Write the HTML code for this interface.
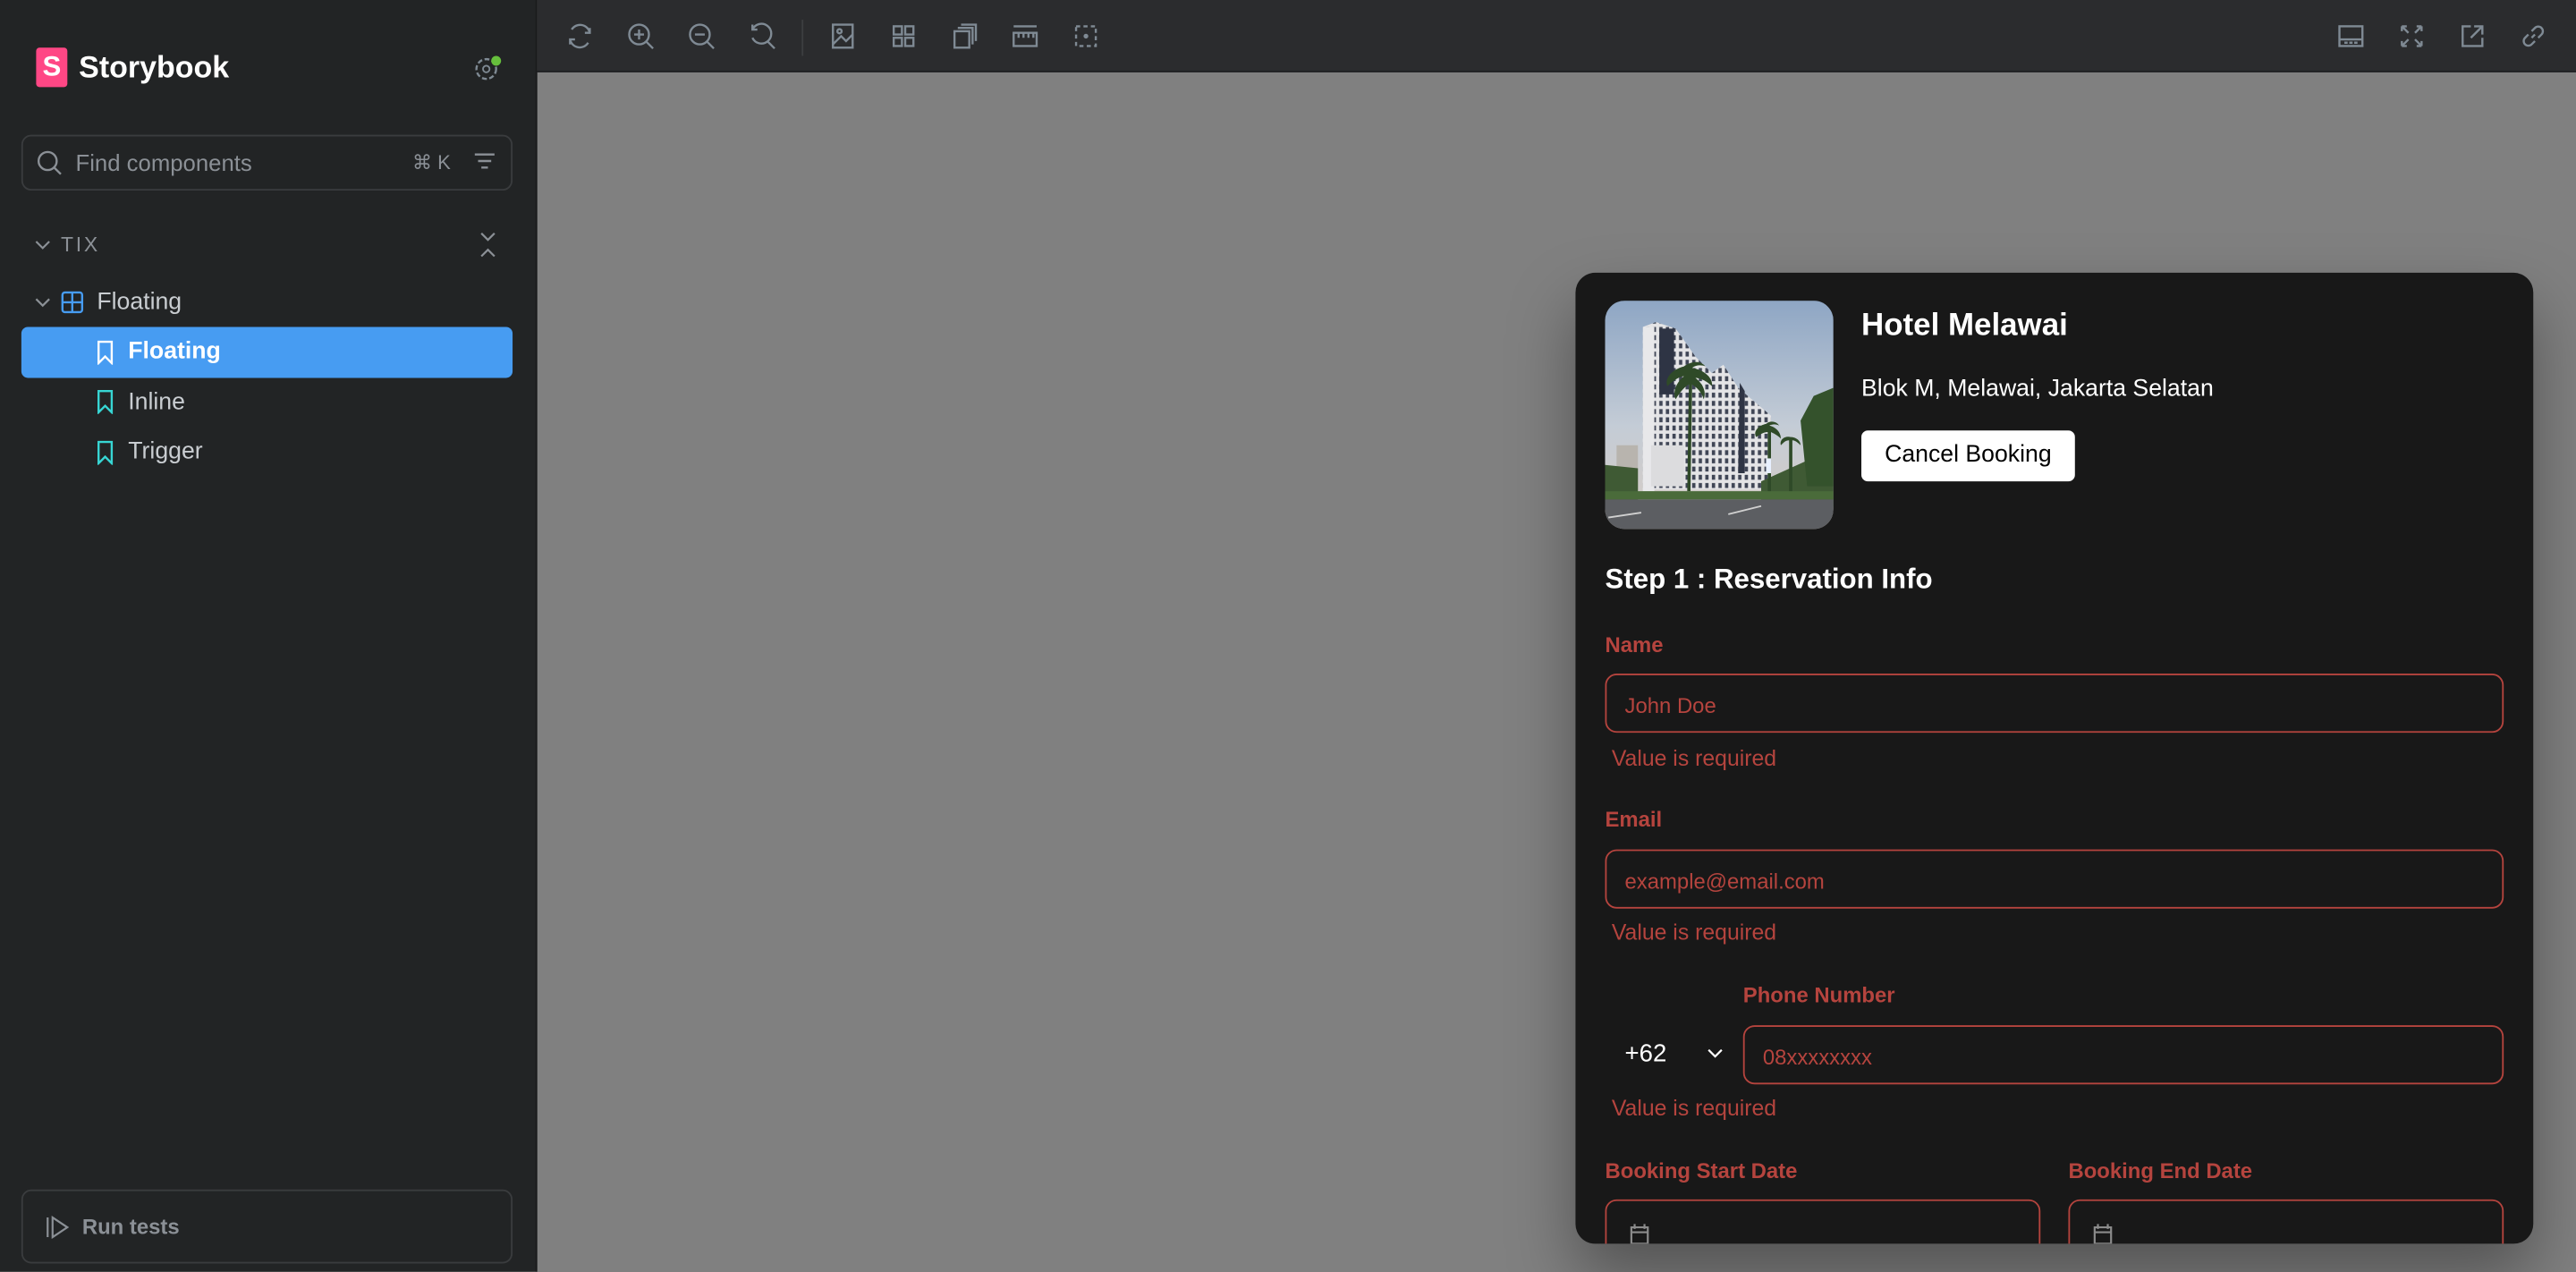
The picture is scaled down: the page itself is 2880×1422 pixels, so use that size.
<!DOCTYPE html>
<html><head><meta charset="utf-8">
<style>
*{box-sizing:border-box;margin:0;padding:0}
html,body{width:2880px;height:1422px;overflow:hidden;background:#808080}
#w{width:1568px;height:774px;transform:scale(1.836735);transform-origin:0 0;position:relative;font-family:"Liberation Sans",sans-serif}
#side{position:absolute;left:0;top:0;width:327px;height:774px;background:#222425;border-right:1px solid #1a1b1c}
#top{position:absolute;left:327px;top:0;right:0;height:44px;background:#2b2c2e;border-bottom:1px solid #1f2022}
#top svg{position:absolute;top:13px;width:18px;height:18px;fill:none;stroke:#7f8a94;stroke-width:1.3}
.card{position:absolute;left:959px;top:166px;width:583px;height:591px;background:#181818;border-radius:12px;box-shadow:0 20px 40px rgba(0,0,0,.35);overflow:hidden;color:#fff}
.lbl{position:absolute;font-size:13px;font-weight:bold;color:#b5443e}
.inp{position:absolute;height:36px;border:1px solid #b5443e;border-radius:7px;font-size:13px;color:#b5443e;padding:11px 11px}
.err{position:absolute;font-size:13.5px;color:#b5443e}
.tree{position:absolute;font-size:14.5px;color:#c9cdd1}
</style></head><body><div id="w">
<div id="side">
  <div style="position:absolute;left:22px;top:29px;width:19px;height:24px;background:#ff4785;border-radius:2px;color:#fff;font-weight:bold;font-size:17px;text-align:center;line-height:24px">S</div>
  <div style="position:absolute;left:48px;top:30px;font-size:18.5px;font-weight:bold;color:#fff">Storybook</div>
  <svg style="position:absolute;left:288px;top:33px" width="18" height="18" viewBox="0 0 18 18"><circle cx="8" cy="9" r="6" fill="none" stroke="#7f8a94" stroke-width="1.3" stroke-dasharray="3 1.5"/><circle cx="8" cy="9" r="2" fill="none" stroke="#7f8a94"/><circle cx="14" cy="4" r="3" fill="#66bf3c"/></svg>
  <div style="position:absolute;left:13px;top:82px;width:299px;height:34px;border:1px solid #3a3c3e;border-radius:6px"></div>
  <svg style="position:absolute;left:22px;top:91px" width="16" height="16" viewBox="0 0 16 16"><circle cx="7" cy="7" r="5.5" fill="none" stroke="#8b9096" stroke-width="1.3"/><path d="M11 11l4 4" stroke="#8b9096" stroke-width="1.3"/></svg>
  <div style="position:absolute;left:46px;top:91px;font-size:14px;color:#8b9096">Find components</div>
  <div style="position:absolute;left:251px;top:92px;font-size:12px;color:#8b9096">⌘ K</div>
  <svg style="position:absolute;left:288px;top:92px" width="14" height="14" viewBox="0 0 14 14" stroke="#8b9096" stroke-width="1.3"><path d="M1 2h12M3 6h8M5 10h4"/></svg>
  <svg style="position:absolute;left:21px;top:145px" width="10" height="8" viewBox="0 0 10 8"><path d="M1 2l4 4 4-4" fill="none" stroke="#8b9096" stroke-width="1.2"/></svg>
  <div style="position:absolute;left:37px;top:142px;font-size:12.5px;color:#8b9096;letter-spacing:1.5px">TIX</div>
  <svg style="position:absolute;left:291px;top:140px" width="12" height="18" viewBox="0 0 12 18"><path d="M2 2l4 4 4-4M2 16l4-4 4 4" fill="none" stroke="#8b9096" stroke-width="1.2"/></svg>
  <svg style="position:absolute;left:21px;top:180px" width="10" height="8" viewBox="0 0 10 8"><path d="M1 2l4 4 4-4" fill="none" stroke="#8b9096" stroke-width="1.2"/></svg>
  <svg style="position:absolute;left:37px;top:177px" width="14" height="14" viewBox="0 0 14 14"><rect x="1" y="1" width="12" height="12" rx="1.5" fill="none" stroke="#479cf2" stroke-width="1.3"/><path d="M7 1v12M1 7h12" stroke="#479cf2" stroke-width="1.3"/></svg>
  <div class="tree" style="left:59px;top:176px">Floating</div>
  <div style="position:absolute;left:13px;top:199px;width:299px;height:31px;background:#479cf2;border-radius:4px"></div>
  <svg style="position:absolute;left:58px;top:207px" width="12" height="15" viewBox="0 0 12 15"><path d="M2 1h8v13l-4-4-4 4z" fill="none" stroke="#fff" stroke-width="1.3"/></svg>
  <div style="position:absolute;left:78px;top:206px;font-size:14.5px;font-weight:bold;color:#fff">Floating</div>
  <svg style="position:absolute;left:58px;top:237px" width="12" height="15" viewBox="0 0 12 15"><path d="M2 1h8v13l-4-4-4 4z" fill="none" stroke="#37d5d3" stroke-width="1.3"/></svg>
  <div class="tree" style="left:78px;top:237px">Inline</div>
  <svg style="position:absolute;left:58px;top:268px" width="12" height="15" viewBox="0 0 12 15"><path d="M2 1h8v13l-4-4-4 4z" fill="none" stroke="#37d5d3" stroke-width="1.3"/></svg>
  <div class="tree" style="left:78px;top:267px">Trigger</div>
  <div style="position:absolute;left:13px;top:724px;width:299px;height:45px;border:1px solid #3a3c3e;border-radius:6px"></div>
  <svg style="position:absolute;left:28px;top:740px" width="14" height="14" viewBox="0 0 14 14"><path d="M1 1v12M4 1l9 6-9 6z" fill="none" stroke="#8b9096" stroke-width="1.2"/></svg>
  <div style="position:absolute;left:50px;top:739px;font-size:13px;font-weight:bold;color:#8b9096">Run tests</div>
</div>
<div id="top">
  <svg style="left:17px" viewBox="0 0 18 18"><path d="M4 5a6 6 0 0 1 11 2M14 13a6 6 0 0 1-11-2M12 7h3V4M6 11H3v3"/></svg>
  <svg style="left:54px" viewBox="0 0 18 18"><circle cx="8" cy="8" r="6"/><path d="M12.5 12.5l4 4M8 5v6M5 8h6"/></svg>
  <svg style="left:91px" viewBox="0 0 18 18"><circle cx="8" cy="8" r="6"/><path d="M12.5 12.5l4 4M5 8h6"/></svg>
  <svg style="left:128px" viewBox="0 0 18 18"><path d="M3 5a6 6 0 1 1 0 5M3 2v3h3M12.5 12.5l4 4"/></svg>
  <div style="position:absolute;left:161px;top:12px;width:1px;height:22px;background:#3c3e40"></div>
  <svg style="left:177px" viewBox="0 0 18 18"><rect x="3" y="2" width="12" height="14"/><circle cx="7" cy="6" r="1.3"/><path d="M3 14l5-5 3 3 4-4"/></svg>
  <svg style="left:214px" viewBox="0 0 18 18"><rect x="3" y="3" width="5" height="5"/><rect x="10" y="3" width="5" height="5"/><rect x="3" y="10" width="5" height="5"/><rect x="10" y="10" width="5" height="5"/></svg>
  <svg style="left:251px" viewBox="0 0 18 18"><rect x="3" y="6" width="9" height="10"/><path d="M5 4h9v10M7 2h9v10"/></svg>
  <svg style="left:288px" viewBox="0 0 18 18"><path d="M2 3h14M2 7h14v8H2zM5 7v3M8 7v3M11 7v3M14 7v3"/></svg>
  <svg style="left:325px" viewBox="0 0 18 18"><rect x="3" y="3" width="12" height="12" stroke-dasharray="2.5 2"/><circle cx="9" cy="9" r=".8" fill="#7f8a94"/></svg>
  <svg style="left:1095px" viewBox="0 0 18 18"><rect x="2" y="3" width="14" height="12"/><path d="M2 11h14M5 13h2M8 13h2M11 13h2"/></svg>
  <svg style="left:1132px" viewBox="0 0 18 18"><path d="M3 3l4 4M3 3v3M3 3h3M15 3l-4 4M15 3v3M15 3h-3M3 15l4-4M3 15v-3M3 15h3M15 15l-4-4M15 15v-3M15 15h-3"/></svg>
  <svg style="left:1169px" viewBox="0 0 18 18"><path d="M8 3H3v12h12v-5M10 3h5v5M15 3l-7 7"/></svg>
  <svg style="left:1206px" viewBox="0 0 18 18"><path d="M8 10l2-2M6 8l-2 2a2.5 2.5 0 0 0 4 4l2-2M12 10l2-2a2.5 2.5 0 0 0-4-4L8 6"/></svg>
</div>
<div class="card">
  <svg style="position:absolute;left:18px;top:17px;border-radius:12px" width="139" height="139" viewBox="0 0 139 139">
    <defs><linearGradient id="sk" x1="0" y1="0" x2="0" y2="1"><stop offset="0" stop-color="#8ea6c4"/><stop offset=".55" stop-color="#c4ccd6"/><stop offset="1" stop-color="#d8cdc2"/></linearGradient>
    <pattern id="win" width="4" height="5" patternUnits="userSpaceOnUse"><rect width="4" height="5" fill="#e4e4e6"/><rect x="1" y="1" width="2" height="3" fill="#404656"/></pattern></defs>
    <rect width="139" height="139" fill="url(#sk)"/>
    <path d="M7 88h13v30H7z" fill="#b8b4ae"/>
    <path d="M23 16l8-3 12 4 12 17 10 10 7-5 9 14 20 17v45H23z" fill="url(#win)"/>
    <path d="M23 16h7v100h-7z" fill="#e8e8ea"/>
    <path d="M33 17h9v40h-9zM82 50l3 5v50h-4z" fill="#2e3444"/>
    <path d="M28 88h20v25H28z" fill="#dcdcde"/>
    <path d="M0 100l20 2 0 20H0zM95 110l44-20v35H95z" fill="#3f5a34"/>
    <path d="M127 58l12-5v60h-16l-4-40z" fill="#34522c"/>
    <path d="M48 40c-8 2-12 8-10 12 4-4 8-6 10-6-5 4-7 10-5 14 3-5 6-8 8-9l-1 65h2l1-65c3 2 6 5 7 9 2-5-1-10-5-13 3 0 7 2 10 5 1-5-5-10-12-11 2-2 6-2 8-1-3-4-9-3-13 0z" fill="#2f4a28"/>
    <path d="M98 75c-5 1-8 5-6 8 3-2 5-3 7-3l0 40h2l0-40c2 1 4 2 6 4 0-4-3-7-7-8 2-1 4-1 6 0-2-3-6-3-8-1zM112 85l0 35h2l0-35c2 0 4 2 5 3 0-3-3-5-6-5-4-1-7 2-6 5 2-2 3-3 5-3z" fill="#2f4a28"/>
    <path d="M0 116h139v5H0z" fill="#4a6b3a"/>
    <path d="M0 121h139v18H0z" fill="#5c5e62"/>
    <path d="M2 132l20-3M75 130l20-5" stroke="#d0d0d0" stroke-width="1"/>
    <rect x="98" y="96" width="3" height="9" fill="#e8f0ff"/>
  </svg>
  <div style="position:absolute;left:174px;top:22px;font-size:19px;font-weight:bold">Hotel Melawai</div>
  <div style="position:absolute;left:174px;top:63px;font-size:14.5px">Blok M, Melawai, Jakarta Selatan</div>
  <div style="position:absolute;left:174px;top:96px;width:130px;height:31px;background:#fff;border-radius:4px;color:#000;font-size:14.5px;text-align:center;line-height:31px">Cancel Booking</div>
  <div style="position:absolute;left:18px;top:177px;font-size:17px;font-weight:bold">Step 1 : Reservation Info</div>
  <div class="lbl" style="left:18px;top:219px">Name</div>
  <div class="inp" style="left:18px;top:244px;width:547px">John Doe</div>
  <div class="err" style="left:22px;top:288px">Value is required</div>
  <div class="lbl" style="left:18px;top:325px">Email</div>
  <div class="inp" style="left:18px;top:351px;width:547px">example@email.com</div>
  <div class="err" style="left:22px;top:394px">Value is required</div>
  <div class="lbl" style="left:102px;top:432px">Phone Number</div>
  <div style="position:absolute;left:30px;top:467px;font-size:15px">+62</div>
  <svg style="position:absolute;left:80px;top:471px" width="10" height="8" viewBox="0 0 10 8"><path d="M1 2l4 4 4-4" fill="none" stroke="#fff" stroke-width="1.2"/></svg>
  <div class="inp" style="left:102px;top:458px;width:463px">08xxxxxxxx</div>
  <div class="err" style="left:22px;top:501px">Value is required</div>
  <div class="lbl" style="left:18px;top:539px">Booking Start Date</div>
  <div class="lbl" style="left:300px;top:539px">Booking End Date</div>
  <div class="inp" style="left:18px;top:564px;width:265px;height:50px"></div>
  <div class="inp" style="left:300px;top:564px;width:265px;height:50px"></div>
  <svg style="position:absolute;left:32px;top:578px" width="14" height="14" viewBox="0 0 14 14"><path d="M2 3h10v10H2zM2 6h10M4 1v3M10 1v3" fill="none" stroke="#8b8b8b" stroke-width="1.2"/></svg>
  <svg style="position:absolute;left:314px;top:578px" width="14" height="14" viewBox="0 0 14 14"><path d="M2 3h10v10H2zM2 6h10M4 1v3M10 1v3" fill="none" stroke="#8b8b8b" stroke-width="1.2"/></svg>
</div>
</div></body></html>
